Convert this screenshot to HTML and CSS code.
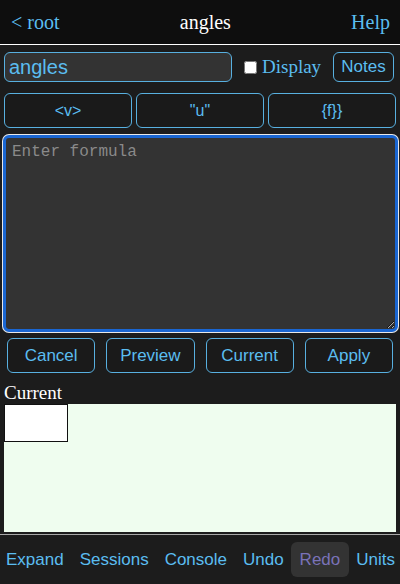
FILE: index.html
```html
<!DOCTYPE html>
<html>
<head>
<meta charset="utf-8">
<link rel="stylesheet" href="styles.css">
</head>
<body>
<header class="topbar">
  <span class="nav-link">&lt; root</span>
  <span class="title">angles</span>
  <span class="nav-link">Help</span>
</header>
<div class="name-row">
  <input class="name-input" type="text" value="angles">
  <label class="display-label"><input type="checkbox" class="check"> Display</label>
  <button class="btn notes-btn">Notes</button>
</div>
<div class="insert-row">
  <button class="btn insert-btn">&lt;v&gt;</button>
  <button class="btn insert-btn">"u"</button>
  <button class="btn insert-btn">{f}}</button>
</div>
<div class="formula-wrap">
  <textarea class="formula" placeholder="Enter formula"></textarea>
</div>
<div class="action-row">
  <button class="btn action-btn">Cancel</button>
  <button class="btn action-btn">Preview</button>
  <button class="btn action-btn">Current</button>
  <button class="btn action-btn">Apply</button>
</div>
<div class="current-label">Current</div>
<div class="current-box">
  <div class="value-cell"></div>
</div>
<footer class="bottombar">
  <span class="foot-item">Expand</span>
  <span class="foot-item">Sessions</span>
  <span class="foot-item">Console</span>
  <span class="foot-item">Undo</span>
  <span class="foot-item foot-active">Redo</span>
  <span class="foot-item">Units</span>
</footer>
</body>
</html>
```
FILE: styles.css
```css
html, body {
  margin: 0;
  padding: 0;
  background: #1c1c1c;
  width: 400px;
  height: 584px;
  overflow: hidden;
}
body {
  display: flex;
  flex-direction: column;
  font-family: "Liberation Sans", Arial, sans-serif;
}
.topbar {
  height: 44px;
  flex: none;
  background: #0e0e0e;
  border-bottom: 1px solid #ffffff;
  display: flex;
  align-items: center;
  justify-content: space-between;
  padding: 0 10px 0 11px;
  font-family: "Liberation Serif", "Times New Roman", serif;
  font-size: 20px;
}
.nav-link { color: #5bbdf0; }
.title { color: #ffffff; }

.btn {
  background: #1a1a1a;
  border: 1px solid #58b0e0;
  border-radius: 6px;
  color: #5bbdf0;
  font-family: "Liberation Sans", Arial, sans-serif;
  padding: 0;
  box-sizing: border-box;
}

.name-row {
  display: flex;
  align-items: center;
  margin-top: 7px;
  padding: 0 6px 0 4px;
  height: 30px;
}
.name-input {
  width: 228px;
  height: 30px;
  box-sizing: border-box;
  background: #333333;
  border: 1px solid #58b0e0;
  border-radius: 6px;
  color: #5bbdf0;
  font-family: "Liberation Sans", Arial, sans-serif;
  font-size: 20px;
  padding: 0 4px;
  margin: 0;
  outline: none;
}
.display-label {
  display: flex;
  align-items: center;
  color: #5bbdf0;
  font-family: "Liberation Serif", "Times New Roman", serif;
  font-size: 19px;
  margin-left: 8px;
}
.check {
  width: 13px;
  height: 13px;
  margin: 0 5px 0 4px;
}
.notes-btn {
  margin-left: auto;
  width: 61px;
  height: 30px;
  font-size: 17px;
}

.insert-row {
  display: flex;
  gap: 4px;
  margin-top: 11px;
  padding: 0 4px;
  height: 35px;
}
.insert-btn {
  flex: 1;
  height: 35px;
  font-size: 16px;
}

.formula-wrap {
  margin-top: 7px;
  padding: 0 2px 0 3px;
}
.formula {
  display: block;
  width: 100%;
  height: 197px;
  box-sizing: border-box;
  margin: 0;
  background: #333333;
  border: 3px solid #1a66d2;
  border-radius: 6px;
  box-shadow: 0 0 0 1px #e8e8e8;
  outline: none;
  color: #dddddd;
  font-family: "Liberation Mono", "Courier New", monospace;
  font-size: 16px;
  padding: 5px 6px;
  resize: vertical;
}
.formula::placeholder { color: #8a8a8a; }

.action-row {
  display: flex;
  gap: 11px;
  margin-top: 6px;
  padding: 0 7px;
  height: 35px;
}
.action-btn {
  flex: 1;
  height: 35px;
  font-size: 17px;
}

.current-label {
  margin-top: 9px;
  padding-left: 4px;
  color: #ffffff;
  font-family: "Liberation Serif", "Times New Roman", serif;
  font-size: 19px;
  line-height: 22px;
}
.current-box {
  margin: 0 4px;
  height: 128px;
  background: #effdef;
}
.value-cell {
  width: 64px;
  height: 38px;
  box-sizing: border-box;
  background: #ffffff;
  border: 1px solid #111111;
}

.bottombar {
  margin-top: 2px;
  flex: 1;
  border-top: 1px solid #a8a8a8;
  display: flex;
  align-items: center;
  justify-content: space-between;
  padding: 0 5px 0 6px;
  font-size: 17px;
}
.foot-item {
  color: #5bbdf0;
  padding: 8px 8.5px;
  margin: 0 -8.5px;
  border-radius: 6px;
  line-height: 19px;
}
.foot-active {
  background: #333333;
  color: #7a72b8;
}
```
